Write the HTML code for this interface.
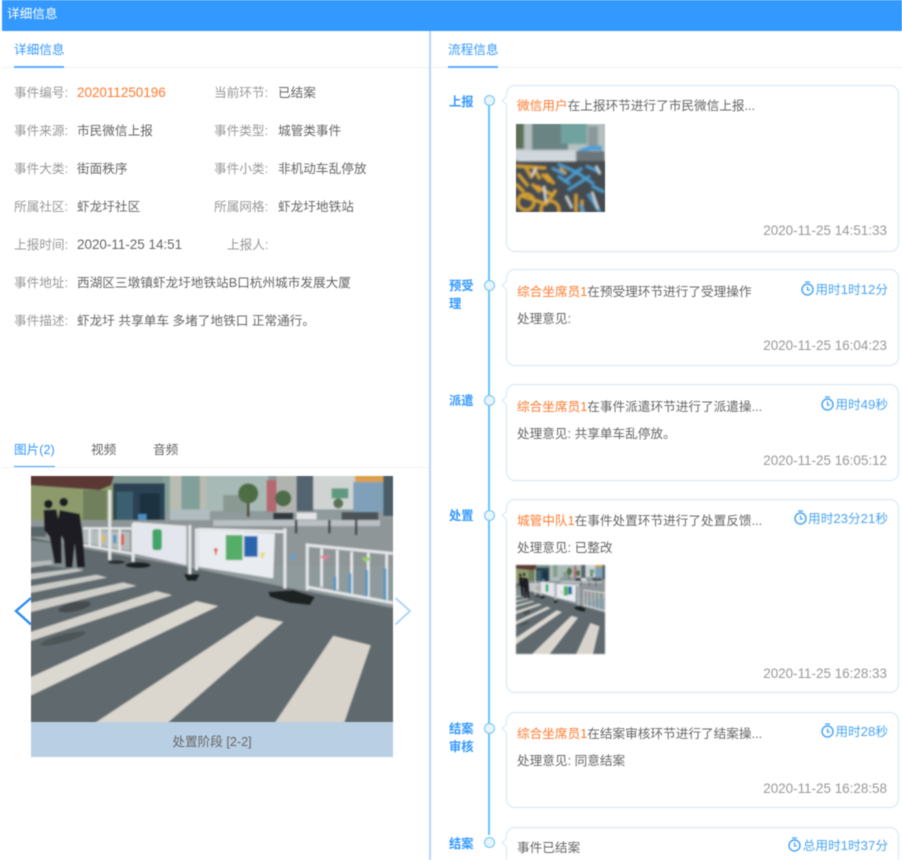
<!DOCTYPE html>
<html lang="zh-CN">
<head>
<meta charset="utf-8">
<title>详细信息</title>
<style>
html,body{margin:0;padding:0;background:#fff}
#r{position:relative;width:902px;height:860px;overflow:hidden;background:#fff;font-family:"Liberation Sans","Noto Sans CJK SC",sans-serif;font-size:12.65px;color:#666;filter:blur(.45px)}
#r div,#r svg{position:absolute}
.t{white-space:nowrap;line-height:20px;height:20px;margin-top:.8px}
.l{color:#999}
.v{color:#666}
.n{font-size:13.45px}
.b{color:#3399ff}
.o{color:#ff7a2e}
.card{left:505.5px;width:393px;border:1.5px solid #d3e7f6;border-radius:9px;background:#fff;box-sizing:border-box}
.tail{left:502.5px;width:6px;height:6px;background:#fff;border-left:1.5px solid #d3e7f6;border-bottom:1.5px solid #d3e7f6;transform:rotate(45deg)}
.dot{left:484px;width:11px;height:11px;box-sizing:border-box;border:1.5px solid #6cc6f5;border-radius:50%;background:#e9f4fc}
.nm{left:449px;color:#3399ff;font-weight:700;font-size:12.3px;line-height:18.5px;width:28px;white-space:normal;margin-top:.8px}
.time{right:15px;color:#999;font-size:13.45px}
.dur{right:14px;color:#4aa5f3;display:block}
.dur .n{font-size:13.2px}
.tk{width:13px;height:15px;margin-top:.5px}
</style>
</head>
<body>
<div id="r">
<svg width="0" height="0" style="left:0;top:0">
<defs>
<filter id="bl" x="-5%" y="-5%" width="110%" height="110%"><feGaussianBlur stdDeviation="2.4"/></filter>
<symbol id="scene" viewBox="94 138 1085 737" preserveAspectRatio="none">
<g filter="url(#bl)">
<rect x="84" y="128" width="1105" height="757" fill="#8f9a9c"/>
<rect x="340" y="128" width="160" height="120" fill="#7d9690"/>
<rect x="490" y="128" width="130" height="120" fill="#82a09a"/>
<rect x="510" y="128" width="35" height="115" fill="#b9bcb0"/>
<rect x="600" y="128" width="20" height="110" fill="#b9bcb0"/>
<rect x="620" y="128" width="185" height="115" fill="#a8bab6"/>
<rect x="670" y="195" width="70" height="50" fill="#8a9a92"/>
<rect x="800" y="150" width="30" height="95" fill="#b4686f"/>
<rect x="830" y="128" width="60" height="120" fill="#b1b4ae"/>
<rect x="890" y="128" width="50" height="115" fill="#53646f"/>
<rect x="940" y="128" width="125" height="110" fill="#cfd4d3"/>
<rect x="995" y="175" width="50" height="30" fill="#5e9a80"/>
<rect x="1065" y="128" width="85" height="28" fill="#dca04e"/>
<rect x="1060" y="156" width="90" height="90" fill="#7fa0b8"/>
<rect x="1150" y="128" width="39" height="130" fill="#4b5d66"/>
<rect x="741" y="200" width="8" height="60" fill="#4a4a3e"/>
<circle cx="745" cy="190" r="30" fill="#4f6d44"/>
<circle cx="850" cy="205" r="24" fill="#4e6c4a"/>
<circle cx="1015" cy="220" r="15" fill="#5a7358"/>
<rect x="84" y="165" width="260" height="125" fill="#8d9b6c"/>
<rect x="250" y="180" width="70" height="90" fill="#6f7f5c"/>
<rect x="340" y="160" width="155" height="120" fill="#2c4352"/>
<rect x="350" y="185" width="50" height="90" fill="#3a5e6e"/>
<rect x="420" y="190" width="60" height="80" fill="#1f3340"/>
<rect x="415" y="252" width="25" height="25" fill="#4a8fc0"/>
<polygon points="84,128 345,128 335,165 300,180 84,165" fill="#5c3835"/>
<rect x="510" y="238" width="120" height="35" fill="#b0bcc0"/>
<rect x="820" y="248" width="60" height="20" fill="#30373c"/>
<rect x="890" y="248" width="60" height="20" fill="#e3e5e6"/>
<rect x="1025" y="246" width="110" height="26" fill="#4b5256"/>
<rect x="84" y="270" width="1105" height="140" fill="#8f9698"/>
<rect x="640" y="270" width="500" height="18" fill="#b9bfc2"/>
<g fill="#3c4144"><rect x="885" y="270" width="7" height="40"/><rect x="985" y="270" width="7" height="40"/><rect x="1065" y="270" width="7" height="45"/></g>
<rect x="84" y="290" width="55" height="30" fill="#58656a"/>
<polygon points="84,320 250,355 560,410 900,480 1189,535 1189,885 84,885" fill="#616b6e"/>
<polygon points="84,330 250,350 250,420 84,400" fill="#808b8f"/>
<polygon points="820,885 1000,617 1112,645 1030,885" fill="#d8d4cb"/>
<polygon points="275,885 770,558 850,575 495,885" fill="#dbd7cf"/>
<polygon points="84,745 590,513 655,528 84,800" fill="#dbd8d0"/>
<polygon points="84,608 470,483 517,495 84,635" fill="#d4d2cb"/>
<polygon points="84,520 370,457 410,467 84,548" fill="#cfcec9"/>
<polygon points="84,470 290,434 322,442 84,490" fill="#c9cac6"/>
<polygon points="84,432 230,415 250,422 84,450" fill="#c1c4c2"/>
<polygon points="84,397 155,390 160,402 84,414" fill="#b4b9b9"/>
<ellipse cx="225" cy="530" rx="50" ry="14" fill="#3d4446" opacity=".75" transform="rotate(-12 225 530)"/>
<ellipse cx="190" cy="625" rx="70" ry="12" fill="#454c4d" opacity=".7" transform="rotate(-15 190 625)"/>
<polygon points="250,300 390,305 390,362 250,338" fill="#b5bcbe"/>
<g fill="none" stroke="#e6e8ea" stroke-width="7">
<path d="M250 295H395M250 345L395 370"/>
<path d="M270 295V350M300 295V355M360 295V362"/>
<path d="M330 180V390" stroke-width="9"/>
</g>
<g fill="none" stroke-width="9"><path d="M310 315V335" stroke="#e0c24a"/><path d="M345 315V340" stroke="#4f96c4"/><path d="M368 312V345" stroke="#d9604e"/></g>
<polygon points="400,282 560,292 560,405 400,370" fill="#e3e6ed"/>
<polygon points="595,300 825,310 820,445 595,410" fill="#e9ecf1"/>
<g fill="none" stroke="#e4e6e8" stroke-width="9">
<path d="M400 280L560 292M595 298L860 305M400 280V395M570 285V440M590 295V420M855 295V475"/>
<path d="M922 345L1179 370M918 470L1179 518M922 340V480"/>
</g>
<g fill="none" stroke="#e9ebed" stroke-width="8">
<path d="M965 355V470M1012 360V480M1055 365V490M1105 368V500M1160 372V510"/>
</g>
<g fill="none" stroke="#4d97c6" stroke-width="8">
<path d="M1005 440V482M1050 430V490M1100 420V498M1155 415V510"/>
</g>
<rect x="458" y="297" width="28" height="63" rx="8" fill="#3fa566"/>
<rect x="678" y="315" width="50" height="75" fill="#55ad68"/>
<rect x="733" y="318" width="40" height="62" fill="#2a66ae"/>
<polygon points="870,372 888,372 880,395" fill="#5fa0d6"/>
<polygon points="780,368 797,368 787,388" fill="#e3dd68"/>
<polygon points="642,355 654,355 648,378" fill="#d95c50"/>
<polygon points="960,378 990,375 975,392" fill="#e07f9e"/>
<polygon points="1085,382 1115,382 1098,398" fill="#9ad060"/>
<g fill="#1d2022">
<polygon points="552,432 600,432 590,452 562,452"/>
<polygon points="805,485 880,480 945,500 930,525 870,518 810,500"/>
<ellipse cx="415" cy="405" rx="38" ry="9"/>
<ellipse cx="350" cy="396" rx="25" ry="6" opacity=".8"/>
</g>
<g fill="#1b1d20">
<polygon points="132,240 170,238 185,310 186,400 165,400 150,320 134,300"/>
<circle cx="146" cy="222" r="13"/>
<polygon points="180,240 240,252 250,320 256,412 232,412 225,340 218,412 198,412 192,330 172,290"/>
<circle cx="192" cy="216" r="13"/>
</g>
</g>
</symbol>
</defs>
</svg>

<!-- header -->
<div style="left:2px;top:0;width:900px;height:30.5px;background:#3399ff"></div>
<div class="t" style="left:7px;top:3px;color:#fff">详细信息</div>

<!-- divider -->
<div style="left:429px;top:31px;width:2px;height:829px;background:#b4d6fb"></div>

<!-- tabs -->
<div style="left:2px;top:67px;width:427px;height:1px;background:#eef1f6"></div>
<div style="left:431px;top:67px;width:471px;height:1px;background:#eef1f6"></div>
<div class="t b" style="left:14px;top:39px">详细信息</div>
<div style="left:13.5px;top:66px;width:50px;height:1.5px;background:#5aaefc"></div>
<div class="t b" style="left:448px;top:39px">流程信息</div>
<div style="left:447.5px;top:66px;width:50px;height:1.5px;background:#5aaefc"></div>

<!-- details -->
<div class="t l" style="left:14px;top:82px">事件编号:</div>
<div class="t o n" style="left:77px;top:82px">202011250196</div>
<div class="t l" style="left:214px;top:82px">当前环节:</div>
<div class="t v" style="left:278px;top:82px">已结案</div>

<div class="t l" style="left:14px;top:120px">事件来源:</div>
<div class="t v" style="left:77px;top:120px">市民微信上报</div>
<div class="t l" style="left:214px;top:120px">事件类型:</div>
<div class="t v" style="left:278px;top:120px">城管类事件</div>

<div class="t l" style="left:14px;top:158px">事件大类:</div>
<div class="t v" style="left:77px;top:158px">街面秩序</div>
<div class="t l" style="left:214px;top:158px">事件小类:</div>
<div class="t v" style="left:278px;top:158px">非机动车乱停放</div>

<div class="t l" style="left:14px;top:196px">所属社区:</div>
<div class="t v" style="left:77px;top:196px">虾龙圩社区</div>
<div class="t l" style="left:214px;top:196px">所属网格:</div>
<div class="t v" style="left:278px;top:196px">虾龙圩地铁站</div>

<div class="t l" style="left:14px;top:234px">上报时间:</div>
<div class="t v n" style="left:77px;top:234px">2020-11-25 14:51</div>
<div class="t l" style="left:227px;top:234px">上报人:</div>

<div class="t l" style="left:14px;top:272px">事件地址:</div>
<div class="t v" style="left:77px;top:272px">西湖区三墩镇虾龙圩地铁站B口杭州城市发展大厦</div>

<div class="t l" style="left:14px;top:310px">事件描述:</div>
<div class="t v" style="left:77px;top:310px">虾龙圩 共享单车 多堵了地铁口 正常通行。</div>

<!-- media tabs -->
<div class="t b" style="left:14px;top:439px">图片(2)</div>
<div class="t v" style="left:91px;top:439px">视频</div>
<div class="t v" style="left:153px;top:439px">音频</div>
<div style="left:2px;top:467px;width:427px;height:1px;background:#eef1f6"></div>
<div style="left:13.5px;top:465.5px;width:41px;height:1.5px;background:#3f9dfb"></div>

<!-- main photo -->
<svg style="left:31px;top:476px" width="362" height="246"><use href="#scene" width="362" height="246"/></svg>
<div style="left:31px;top:722px;width:362px;height:35px;background:#b9cfe4"></div>
<div class="t v" style="left:31px;top:731px;width:362px;text-align:center">处置阶段 [2-2]</div>
<svg style="left:12px;top:594px" width="22" height="34" viewBox="0 0 22 34"><path d="M19 4L4 17L19 30.500" fill="none" stroke="#2b8cf0" stroke-width="2.400"/></svg>
<svg style="left:393px;top:594px" width="22" height="34" viewBox="0 0 22 34"><path d="M2.500 4L17 17L2.500 30.500" fill="none" stroke="#b4d6fb" stroke-width="2"/></svg>

<!-- timeline -->
<div style="left:487.7px;top:105px;width:2px;height:730px;background:#63c6fb"></div>

<div class="nm" style="top:92px">上报</div>
<div class="dot" style="top:95px"></div>
<div class="nm" style="top:276px">预受理</div>
<div class="dot" style="top:280px"></div>
<div class="nm" style="top:391px">派遣</div>
<div class="dot" style="top:395px"></div>
<div class="nm" style="top:506px">处置</div>
<div class="dot" style="top:510px"></div>
<div class="nm" style="top:719px">结案审核</div>
<div class="dot" style="top:722.500px"></div>
<div class="nm" style="top:834px">结案</div>
<div class="dot" style="top:837px"></div>

<!-- card 1 -->
<div class="card" style="top:84.500px;height:167px"></div>
<div class="tail" style="top:97px"></div>
<div class="t" style="left:517px;top:95px"><span class="o">微信用户</span>在上报环节进行了市民微信上报...</div>
<svg style="left:516px;top:123.500px" width="89" height="88" viewBox="0 0 89 88">
<defs><filter id="b2" x="-5%" y="-5%" width="110%" height="110%"><feGaussianBlur stdDeviation="1"/></filter></defs>
<g filter="url(#b2)">
<rect x="-4" y="-4" width="97" height="96" fill="#8d9a9e"/>
<rect x="-4" y="-4" width="97" height="34" fill="#b4c0c0"/>
<rect x="16" y="-4" width="36" height="30" fill="#6b8484"/>
<rect x="45" y="-4" width="26" height="24" fill="#6fa3a0"/>
<rect x="72" y="2" width="10" height="20" fill="#8b989a"/>
<rect x="-4" y="-4" width="12" height="29" fill="#5b7058"/>
<rect x="-4" y="26" width="97" height="10" fill="#cfd6dc"/>
<path d="M60 28Q70 20 86 22L86 27Q72 25 62 30Z" fill="#4a9fd6"/>
<rect x="60" y="27" width="29" height="12" fill="#6d7478"/>
<rect x="-4" y="37" width="97" height="55" fill="#454b4f"/>
<g fill="none" stroke="#d9a52b" stroke-width="2.800">
<path d="M0 42L30 44M2 50L12 62M10 44L16 54M18 45L24 55M26 50L34 58M30 50L38 60M0 60L8 68M16 60L24 68M6 72L30 80L40 66M20 62L38 72M44 44L50 50"/>
<circle cx="10" cy="78" r="8"/><circle cx="34" cy="86" r="9"/><path d="M60 70V88M66 76V88"/>
</g>
<g fill="none" stroke="#4c9ed0" stroke-width="2.800">
<path d="M42 40L60 48M48 58L66 44M52 66L74 52M60 48L78 60M36 44L48 50M70 42L84 48M42 52L54 60"/>
<path d="M72 70L84 88M64 80L68 88M76 62L88 68"/>
</g>
<g fill="none" stroke="#dfe3e6" stroke-width="2"><path d="M28 62L30 78M76 68L82 85M20 44L16 52M80 42L84 50M50 72L56 84M2 36H60"/></g>
</g>
</svg>
<div class="t time" style="top:220.500px">2020-11-25 14:51:33</div>

<!-- card 2 -->
<div class="card" style="top:269px;height:97px"></div>
<div class="tail" style="top:282px"></div>
<div class="t" style="left:517px;top:281px"><span class="o">综合坐席员1</span>在预受理环节进行了受理操作</div>
<svg class="tk" style="left:801px;top:280px" viewBox="0 0 13 15"><circle cx="6.500" cy="8.500" r="5.500" fill="none" stroke="#4aa5f3" stroke-width="1.500"/><path d="M4 1H9M6.500 5.500V9H9" fill="none" stroke="#4aa5f3" stroke-width="1.300"/></svg>
<div class="t dur" style="top:279px">用时<span class="n">1</span>时<span class="n">12</span>分</div>
<div class="t" style="left:517px;top:308px">处理意见:</div>
<div class="t time" style="top:335px">2020-11-25 16:04:23</div>

<!-- card 3 -->
<div class="card" style="top:384px;height:97px"></div>
<div class="tail" style="top:397px"></div>
<div class="t" style="left:517px;top:396px"><span class="o">综合坐席员1</span>在事件派遣环节进行了派遣操...</div>
<svg class="tk" style="left:821px;top:395px" viewBox="0 0 13 15"><circle cx="6.500" cy="8.500" r="5.500" fill="none" stroke="#4aa5f3" stroke-width="1.500"/><path d="M4 1H9M6.500 5.500V9H9" fill="none" stroke="#4aa5f3" stroke-width="1.300"/></svg>
<div class="t dur" style="top:394px">用时<span class="n">49</span>秒</div>
<div class="t" style="left:517px;top:423px">处理意见: 共享单车乱停放。</div>
<div class="t time" style="top:450px">2020-11-25 16:05:12</div>

<!-- card 4 -->
<div class="card" style="top:498.500px;height:194.500px"></div>
<div class="tail" style="top:512px"></div>
<div class="t" style="left:517px;top:510px"><span class="o">城管中队1</span>在事件处置环节进行了处置反馈...</div>
<svg class="tk" style="left:794px;top:509px" viewBox="0 0 13 15"><circle cx="6.500" cy="8.500" r="5.500" fill="none" stroke="#4aa5f3" stroke-width="1.500"/><path d="M4 1H9M6.500 5.500V9H9" fill="none" stroke="#4aa5f3" stroke-width="1.300"/></svg>
<div class="t dur" style="top:508px">用时<span class="n">23</span>分<span class="n">21</span>秒</div>
<div class="t" style="left:517px;top:537px">处理意见: 已整改</div>
<svg style="left:516px;top:565px;filter:blur(.8px)" width="89" height="89"><use href="#scene" width="89" height="89"/></svg>
<div class="t time" style="top:663px">2020-11-25 16:28:33</div>

<!-- card 5 -->
<div class="card" style="top:712px;height:96px"></div>
<div class="tail" style="top:725px"></div>
<div class="t" style="left:517px;top:723px"><span class="o">综合坐席员1</span>在结案审核环节进行了结案操...</div>
<svg class="tk" style="left:821px;top:722px" viewBox="0 0 13 15"><circle cx="6.500" cy="8.500" r="5.500" fill="none" stroke="#4aa5f3" stroke-width="1.500"/><path d="M4 1H9M6.500 5.500V9H9" fill="none" stroke="#4aa5f3" stroke-width="1.300"/></svg>
<div class="t dur" style="top:721px">用时<span class="n">28</span>秒</div>
<div class="t" style="left:517px;top:750px">处理意见: 同意结案</div>
<div class="t time" style="top:778px">2020-11-25 16:28:58</div>

<!-- card 6 -->
<div class="card" style="top:826.500px;height:60px"></div>
<div class="tail" style="top:839px"></div>
<div class="t" style="left:517px;top:837px">事件已结案</div>
<svg class="tk" style="left:788px;top:836px" viewBox="0 0 13 15"><circle cx="6.500" cy="8.500" r="5.500" fill="none" stroke="#4aa5f3" stroke-width="1.500"/><path d="M4 1H9M6.500 5.500V9H9" fill="none" stroke="#4aa5f3" stroke-width="1.300"/></svg>
<div class="t dur" style="top:835px">总用时<span class="n">1</span>时<span class="n">37</span>分</div>
</div>
</body>
</html>
